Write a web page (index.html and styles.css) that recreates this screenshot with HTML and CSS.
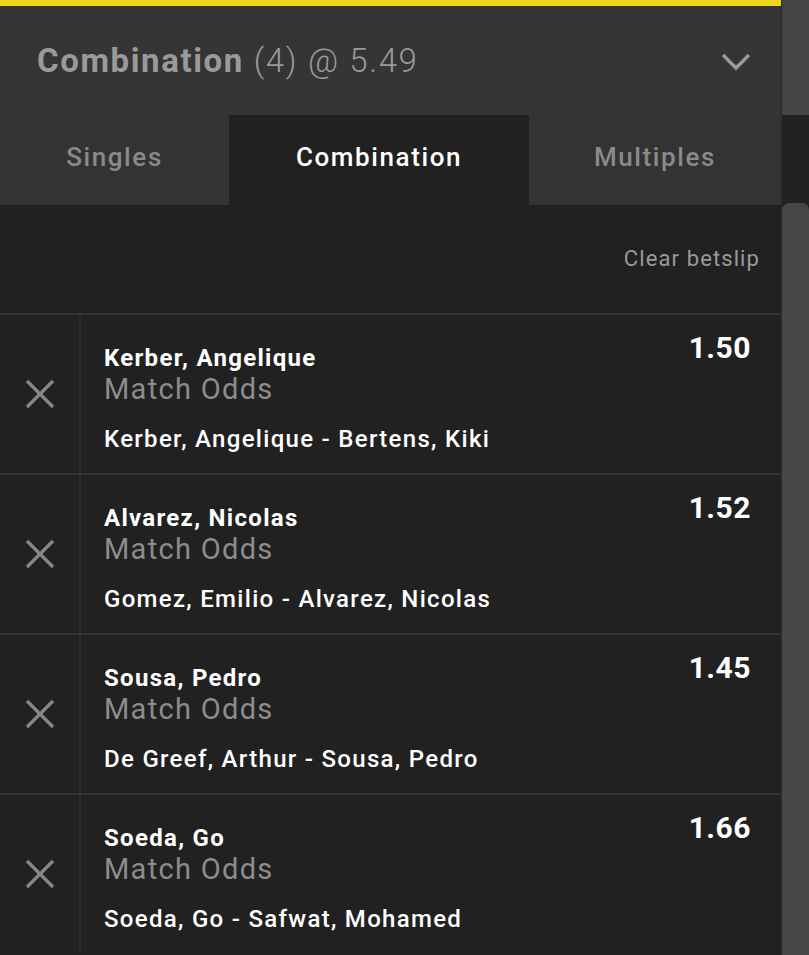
FILE: index.html
```html
<!DOCTYPE html>
<html lang="en">
<head>
    <meta charset="UTF-8">
    <meta name="viewport" content="width=device-width, initial-scale=1.0">
    <title>Betslip</title>
    <link rel="stylesheet" href="styles.css">
</head>
<body>
    <div class="page">
        <div class="slip">
            <div class="topbar"></div>

            <div class="summary">
                <div class="summary-title">
                    <strong>Combination</strong> <span class="count">(4)</span> <span class="price">@ 5.49</span>
                </div>
                <svg class="chevron" width="30" height="20" viewBox="0 0 30 20" aria-hidden="true">
                    <polyline points="2,3 15,16 28,3" fill="none" stroke="#9a9a9a" stroke-width="3.4"/>
                </svg>
            </div>

            <div class="tabs">
                <button class="tab">Singles</button>
                <button class="tab active">Combination</button>
                <button class="tab">Multiples</button>
            </div>

            <div class="toolbar">
                <button class="clear">Clear betslip</button>
            </div>

            <div class="bet">
                <div class="remove">
                    <svg width="30" height="30" viewBox="0 0 30 30" aria-hidden="true">
                        <path d="M2 2 L28 28 M28 2 L2 28" stroke="#888" stroke-width="3.2"/>
                    </svg>
                </div>
                <div class="bet-body">
                    <div class="bet-info">
                        <div class="selection">Kerber, Angelique</div>
                        <div class="market">Match Odds</div>
                        <div class="event">Kerber, Angelique - Bertens, Kiki</div>
                    </div>
                    <div class="odds">1.50</div>
                </div>
            </div>

            <div class="bet">
                <div class="remove">
                    <svg width="30" height="30" viewBox="0 0 30 30" aria-hidden="true">
                        <path d="M2 2 L28 28 M28 2 L2 28" stroke="#888" stroke-width="3.2"/>
                    </svg>
                </div>
                <div class="bet-body">
                    <div class="bet-info">
                        <div class="selection">Alvarez, Nicolas</div>
                        <div class="market">Match Odds</div>
                        <div class="event">Gomez, Emilio - Alvarez, Nicolas</div>
                    </div>
                    <div class="odds">1.52</div>
                </div>
            </div>

            <div class="bet">
                <div class="remove">
                    <svg width="30" height="30" viewBox="0 0 30 30" aria-hidden="true">
                        <path d="M2 2 L28 28 M28 2 L2 28" stroke="#888" stroke-width="3.2"/>
                    </svg>
                </div>
                <div class="bet-body">
                    <div class="bet-info">
                        <div class="selection">Sousa, Pedro</div>
                        <div class="market">Match Odds</div>
                        <div class="event">De Greef, Arthur - Sousa, Pedro</div>
                    </div>
                    <div class="odds">1.45</div>
                </div>
            </div>

            <div class="bet">
                <div class="remove">
                    <svg width="30" height="30" viewBox="0 0 30 30" aria-hidden="true">
                        <path d="M2 2 L28 28 M28 2 L2 28" stroke="#888" stroke-width="3.2"/>
                    </svg>
                </div>
                <div class="bet-body">
                    <div class="bet-info">
                        <div class="selection">Soeda, Go</div>
                        <div class="market">Match Odds</div>
                        <div class="event">Soeda, Go - Safwat, Mohamed</div>
                    </div>
                    <div class="odds">1.66</div>
                </div>
            </div>
        </div>

        <div class="rail">
            <div class="rail-top"></div>
            <div class="rail-gap"></div>
            <div class="rail-thumb"></div>
        </div>
    </div>
</body>
</html>
```

FILE: styles.css
```css
/* General Styles */
body {
    margin: 0;
    padding: 0;
    background-color: #212121;
    font-family: Roboto, 'Noto Sans', sans-serif;
    color: #fff;
    overflow: hidden;
}

button {
    font-family: inherit;
    background: none;
    border: none;
    padding: 0;
    cursor: pointer;
}

.page {
    display: flex;
    height: 955px;
}

.slip {
    width: 781px;
    border-right: 1px solid #2a2a2a;
    background-color: #212121;
}

/* Yellow strip on top */
.topbar {
    height: 6px;
    background-color: #efd41c;
}

/* Combination header */
.summary {
    height: 109px;
    display: flex;
    align-items: center;
    justify-content: space-between;
    padding: 0 30px 0 37px;
    background-color: #353535;
}

.summary-title {
    font-size: 33px;
    letter-spacing: 1.6px;
    color: #9a9a9a;
}

.summary-title strong {
    font-weight: 700;
}

.summary-title .count,
.summary-title .price {
    font-weight: 300;
}

.chevron {
    display: block;
    margin-top: 2px;
}

/* Tabs */
.tabs {
    display: grid;
    grid-template-columns: 229px 300px 1fr;
    height: 90px;
    background-color: #333;
}

.tab {
    font-size: 26px;
    font-weight: 500;
    letter-spacing: 1.6px;
    color: #8a8a8a;
    padding-bottom: 6px;
}

.tab.active {
    background-color: #212121;
    color: #fff;
}

/* Clear link row */
.toolbar {
    height: 108px;
    display: flex;
    align-items: center;
    justify-content: flex-end;
    padding-right: 21px;
}

.clear {
    font-size: 22px;
    letter-spacing: 1.1px;
    color: #9a9a9a;
    margin-bottom: 2px;
}

/* Bet rows */
.bet {
    display: flex;
    height: 158px;
    border-top: 2px solid #333;
}

.remove {
    width: 79px;
    flex-shrink: 0;
    display: flex;
    align-items: center;
    justify-content: center;
    border-right: 2px solid #2c2c2c;
}

.remove svg {
    display: block;
    margin-left: 1px;
}

.bet-body {
    flex: 1;
    display: flex;
    justify-content: space-between;
    padding: 0 30px 0 23px;
}

.bet-info {
    padding-top: 28px;
}

.selection {
    font-size: 24px;
    font-weight: 700;
    letter-spacing: 1.3px;
    line-height: 30px;
}

.market {
    font-size: 29px;
    letter-spacing: 1.3px;
    line-height: 30px;
    color: #8c8c8c;
    margin-top: 1px;
}

.event {
    font-size: 24px;
    font-weight: 500;
    letter-spacing: 1.3px;
    line-height: 30px;
    margin-top: 20px;
}

.odds {
    padding-top: 18px;
    font-size: 30px;
    font-weight: 700;
    letter-spacing: 0.5px;
    line-height: 30px;
}

/* Scrollbar rail */
.rail {
    width: 27px;
    display: flex;
    flex-direction: column;
}

.rail-top {
    height: 115px;
    background-color: #454545;
}

.rail-gap {
    height: 88px;
    background-color: #222;
}

.rail-thumb {
    flex: 1;
    background-color: #474747;
    border-radius: 7px 7px 0 0;
}
```
